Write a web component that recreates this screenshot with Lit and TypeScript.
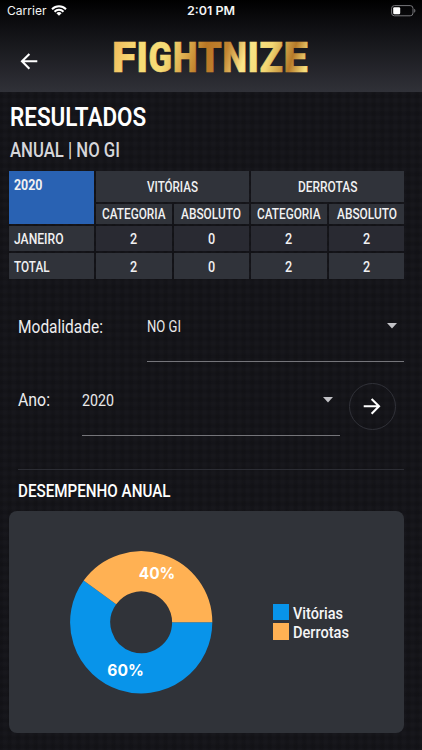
import { LitElement, html, svg, css } from "lit";
import { customElement, property } from "lit/decorators.js";

/** One line of condensed text. The glyphs are fitted to `w`; `base` is the baseline inside a box of height `h`. */
@customElement("fit-text")
export class FitText extends LitElement {
  @property() text = "";
  @property({ type: Number }) w = 50;
  @property({ type: Number }) h = 20;
  @property({ type: Number }) base = 15;
  @property({ type: Number }) size = 14;

  static styles = css`
    :host { display: block; flex: none; font-family: Roboto, "Liberation Sans", sans-serif; font-weight: 500; }
    svg { display: block; overflow: visible; }
    text { fill: currentColor; }
  `;

  render() {
    return html`<svg width=${this.w} height=${this.h} role="img" aria-label=${this.text}>
      <text x="0" y=${this.base} font-size=${this.size} textLength=${this.w} lengthAdjust="spacingAndGlyphs">${this.text}</text>
    </svg>`;
  }
}

const fit = (text: string, w: number, h: number, base: number, size: number, cls = "") =>
  html`<fit-text class=${cls} .text=${text} .w=${w} .h=${h} .base=${base} .size=${size}></fit-text>`;

@customElement("status-bar")
export class StatusBar extends LitElement {
  static styles = css`
    :host { display: grid; grid-template-columns: 1fr auto 1fr; height: 22px; padding: 0 6px 0 7px; box-sizing: border-box;
      color: #f4f4f4; align-items: start; }
    .left { display: flex; gap: 4px; }
    fit-text { font-family: Inter, sans-serif; font-weight: 400; }
    .time { font-weight: 600; margin-right: 1px; }
    .wifi { margin-top: 5px; }
    .battery { justify-self: end; margin-top: 5px; }
  `;
  render() {
    return html`
      <div class="left">
        ${fit("Carrier", 39.5, 22, 15.3, 12)}
        <svg class="wifi" width="16" height="11" viewBox="0 0 16 11">
          <g fill="none" stroke="#fff" stroke-width="2">
            <path d="M1 4.2a10 10 0 0 1 14 0" />
            <path d="M3.5 6.7a6.4 6.4 0 0 1 9 0" />
          </g>
          <path d="M8 10.8 5.4 8.2a3.7 3.7 0 0 1 5.2 0z" fill="#fff" />
        </svg>
      </div>
      ${fit("2:01 PM", 48, 22, 15.3, 12, "time")}
      <svg class="battery" width="25" height="12" viewBox="0 0 25 12">
        <rect x="0.6" y="0.6" width="21.4" height="10.2" rx="2.8" fill="none" stroke="#77777a" />
        <rect x="2.2" y="2.2" width="7" height="7" rx="1.2" fill="#fff" />
        <path d="M23.2 3.8v4q1.2-.6 1.2-2t-1.2-2z" fill="#77777a" />
      </svg>`;
  }
}

@customElement("app-header")
export class AppHeader extends LitElement {
  static styles = css`
    :host { display: block; height: 92px; background: linear-gradient(#000 0%, #0d0d10 25%, #303138 100%); }
    .bar { display: flex; height: 70px; }
    .back { margin: 31px 0 0 20px; }
    .logo { margin: 20px 0 0 75px; overflow: visible; }
    .logo text { font: 900 42px Roboto, sans-serif; fill: url(#gold); stroke: url(#gold); stroke-width: 0.6; stroke-linejoin: miter; }
  `;
  /** Start and advance of each wordmark letter. */
  private letters: [string, number, number][] = [
    ["F", -1, 24], ["I", 23.6, 11.4], ["G", 35.6, 23.4], ["H", 59.9, 24.4], ["T", 85, 23.8],
    ["N", 109.4, 24.4], ["I", 134.5, 11.4], ["Z", 146.4, 23.4], ["E", 170.4, 24.2],
  ];
  render() {
    return html`
      <status-bar></status-bar>
      <div class="bar">
        <svg class="back" width="18" height="17" viewBox="0 0 18 17" fill="none" stroke="#fff" stroke-width="2.1">
          <path d="M17.3 8.3H2.4M9.4 1 2 8.3l7.4 7.4" />
        </svg>
        <svg class="logo" width="194" height="32">
          <defs>
            <linearGradient id="gold" gradientUnits="userSpaceOnUse" x1="0" y1="0" x2="184" y2="54">
              <stop offset="0" stop-color="#efba5a" />
              <stop offset="0.13" stop-color="#f8dc76" />
              <stop offset="0.28" stop-color="#f6dc76" />
              <stop offset="0.38" stop-color="#dcab4c" />
              <stop offset="0.47" stop-color="#b97624" />
              <stop offset="0.58" stop-color="#c18431" />
              <stop offset="0.68" stop-color="#fbe68a" />
              <stop offset="0.8" stop-color="#f3d873" />
              <stop offset="0.92" stop-color="#b67a29" />
              <stop offset="1" stop-color="#f6df7c" />
            </linearGradient>
          </defs>
          ${this.letters.map(([c, x, w]) =>
            svg`<text x=${x} y="30.2" textLength=${w} lengthAdjust="spacingAndGlyphs">${c}</text>`)}
        </svg>
      </div>`;
  }
}

@customElement("results-table")
export class ResultsTable extends LitElement {
  static styles = css`
    :host { display: grid; grid-template-columns: 84.6px repeat(4, 1fr); grid-template-rows: 31px 19.5px 25px 25.5px;
      gap: 2.2px 2px; width: 395px; color: #f1f1f2; }
    .cell { display: flex; justify-content: center; background: #30333a; }
    .year { grid-row: span 2; justify-content: flex-start; padding-left: 5px; background: #2962b3; }
    .year fit-text { font-weight: 700; }
    .group { grid-column: span 2; }
    .name { justify-content: flex-start; padding-left: 5px; }
    .dark { background: #292a32; }
  `;
  private rows = [
    { name: "JANEIRO", w: 49.5, values: [2, 0, 2, 2], base: 18.4 },
    { name: "TOTAL", w: 35.5, values: [2, 0, 2, 2], base: 18.8 },
  ];
  render() {
    return html`
      <div class="cell year">${fit("2020", 28.5, 30, 18.8, 14.2)}</div>
      <div class="cell group">${fit("VITÓRIAS", 51, 31, 21.3, 14)}</div>
      <div class="cell group">${fit("DERROTAS", 59.5, 31, 21.3, 14)}</div>
      ${[0, 1].map(() => html`
        <div class="cell">${fit("CATEGORIA", 63.5, 19, 14.6, 14)}</div>
        <div class="cell">${fit("ABSOLUTO", 60, 19, 14.6, 14)}</div>`)}
      ${this.rows.map((r, i) => html`
        <div class="cell name">${fit(r.name, r.w, 25, r.base, 14)}</div>
        ${r.values.map((v) => html`<div class=${i ? "cell" : "cell dark"}>${fit(String(v), 7.2, 25, r.base, 14.4)}</div>`)}`)}`;
  }
}

@customElement("select-field")
export class SelectField extends LitElement {
  @property() value = "";
  @property({ type: Number }) textWidth = 30;
  static styles = css`
    :host { display: flex; box-sizing: border-box; height: 51px; border-bottom: 1px solid #75757a; color: #e9e9ea;
      justify-content: space-between; }
    fit-text { font-weight: 400; }
    .caret { margin: 12px 7px 0 0; }
  `;
  render() {
    return html`${fit(this.value, this.textWidth, 30, 20.6, 16.2)}
      <svg class="caret" width="10" height="6"><path d="M0 0h10L5 5.4z" fill="#c2c2c6" /></svg>`;
  }
}

@customElement("donut-card")
export class DonutCard extends LitElement {
  static styles = css`
    :host { display: flex; box-sizing: border-box; width: 395px; height: 222px; border-radius: 8px; background: #303339;
      padding: 40px 0 0 61px; }
    .slice { fill: none; stroke-width: 40.2; }
    .pct { font: 700 16px Inter, sans-serif; fill: #fff; text-anchor: middle; }
    .legend { display: flex; flex-direction: column; gap: 3px; margin: 53px 0 0 59.5px; color: #f5f5f6; }
    .item { display: flex; gap: 4px; }
    .swatch { width: 16.5px; height: 16.5px; }
    .blue { background: #0894ea; }
    .orange { background: #ffb153; }
  `;
  private ring(from: number, to: number, color: string) {
    const r = 51;
    const p = (a: number) => `${71.2 + r * Math.cos(a * 2 * Math.PI)} ${71.3 + r * Math.sin(a * 2 * Math.PI)}`;
    return svg`<path class="slice" stroke=${color} d="M${p(from)}A${r} ${r} 0 ${to - from > 0.5 ? 1 : 0} 1 ${p(to)}" />`;
  }
  render() {
    return html`
      <svg width="143" height="143">
        ${this.ring(0, 0.6, "#0894ea")}${this.ring(0.6, 1, "#ffb153")}
        <text class="pct" x="87" y="28.3" textLength="36.5" lengthAdjust="spacingAndGlyphs">40%</text>
        <text class="pct" x="55.5" y="125.3" textLength="36.5" lengthAdjust="spacingAndGlyphs">60%</text>
      </svg>
      <div class="legend">
        <div class="item"><span class="swatch blue"></span>${fit("Vitórias", 50, 16.5, 14.8, 16.4)}</div>
        <div class="item"><span class="swatch orange"></span>${fit("Derrotas", 56, 16.5, 14.8, 16.4)}</div>
      </div>`;
  }
}

@customElement("app-root")
export class AppRoot extends LitElement {
  static styles = css`
    :host { display: block; width: 422px; height: 750px; overflow: hidden; background-color: #17171c;
      background-image: repeating-linear-gradient(90deg, #0000001f 0 2px, transparent 4px 6px, #0000001f 8.67px),
        repeating-linear-gradient(#0000001f 0 2px, transparent 4px 6px, #0000001f 8.67px); }
    main { padding-left: 9.4px; color: #fff; }
    .title, .sub { margin-left: 0.4px; }
    .title { font-weight: 600; }
    .sub { color: #d6d6da; }
    .row { display: flex; padding-left: 8.5px; }
    .label { font-weight: 400; color: #ededee; }
    .mode { height: 73.5px; margin-top: 32.7px; }
    .mode select-field { width: 257.5px; margin-left: 44px; }
    .year { height: 78px; }
    .year select-field { width: 258px; margin-left: 32px; }
    .go { display: flex; align-items: center; justify-content: center; box-sizing: border-box; width: 47px; height: 47px;
      margin: -2px 0 0 9px; border: 1px solid #303138; border-radius: 50%; }
    .rule { width: 386.5px; height: 1px; margin: 6px 0 0 8.3px; background: #2c2d34; }
  `;
  render() {
    return html`
      <app-header></app-header>
      <main>
        ${fit("RESULTADOS", 136.2, 44, 34.4, 26, "title")}
        ${fit("ANUAL | NO GI", 110, 35, 21.2, 19.8, "sub")}
        <results-table></results-table>
        <div class="row mode">
          ${fit("Modalidade:", 85, 30, 21.6, 17.6, "label")}
          <select-field .value=${"NO GI"} .textWidth=${34}></select-field>
        </div>
        <div class="row year">
          ${fit("Ano:", 32, 30, 21, 17.6, "label")}
          <select-field .value=${"2020"} .textWidth=${32}></select-field>
          <div class="go">
            <svg width="18" height="17" viewBox="0 0 18 17" fill="none" stroke="#fff" stroke-width="2.1">
              <path d="M.7 8.3h14.9M8.6 1 16 8.3l-7.4 7.4" />
            </svg>
          </div>
        </div>
        <div class="rule"></div>
        <div class="row">${fit("DESEMPENHO ANUAL", 152.5, 41, 27, 17.6)}</div>
        <donut-card></donut-card>
      </main>`;
  }
}
